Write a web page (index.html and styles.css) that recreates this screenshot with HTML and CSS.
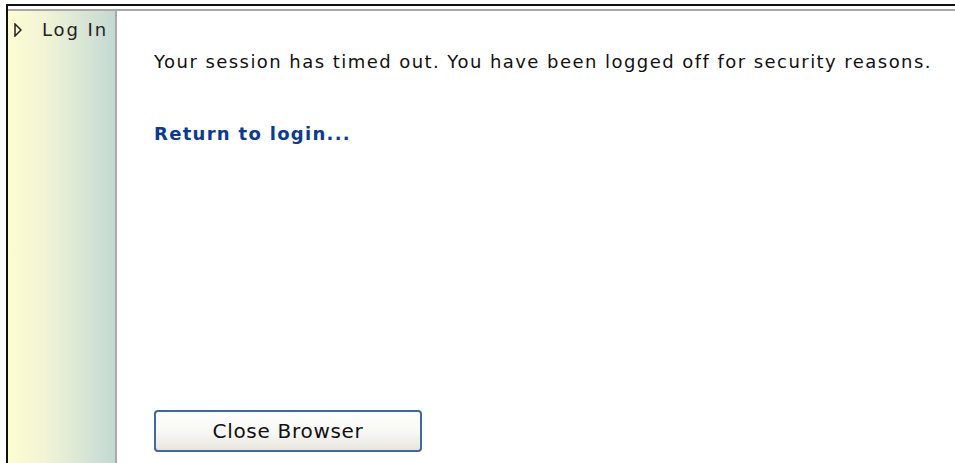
FILE: index.html
```html
<!DOCTYPE html>
<html lang="en">
<head>
<meta charset="utf-8">
<title>Session timed out</title>
<link rel="stylesheet" href="styles.css">
</head>
<body>
  <div class="frame">
    <div class="frame-rule"></div>
    <div class="layout">
      <nav class="sidebar">
        <a class="nav-item" href="#">
          <svg class="nav-arrow" width="8" height="14" viewBox="0 0 8 14" aria-hidden="true">
            <path d="M1 1 L7 7 L1 13 Z" fill="none" stroke="#222" stroke-width="1.5" stroke-linejoin="miter"/>
          </svg>
          <span>Log In</span>
        </a>
      </nav>
      <main class="content">
        <p class="message">Your session has timed out. You have been logged off for security reasons.</p>
        <a class="return-link" href="#">Return to login...</a>
        <div class="actions">
          <button class="btn" type="button">Close Browser</button>
        </div>
      </main>
    </div>
  </div>
</body>
</html>
```

FILE: styles.css
```css
html, body {
  margin: 0;
  padding: 0;
  height: 100%;
  background: #fff;
  overflow: hidden;
}

.frame {
  margin: 4px 0 0 6px;
  height: calc(100% - 4px);
  border-top: 2px solid #111;
  border-left: 2px solid #111;
  display: flex;
  flex-direction: column;
  box-sizing: border-box;
}

.frame-rule {
  margin-top: 3px;
  height: 2px;
  background: #a8a8a8;
  flex: none;
}

.layout {
  flex: 1;
  display: flex;
}

.sidebar {
  width: 107px;
  border-right: 2px solid #a9a9a9;
  background: linear-gradient(to right, #fdfdd2 0%, #f1f4d6 35%, #d8e6d4 70%, #c3d9d3 100%);
  padding-top: 8px;
  box-sizing: content-box;
}

.nav-item {
  display: flex;
  align-items: center;
  gap: 20px;
  padding-left: 6px;
  font-family: "DejaVu Sans", Verdana, sans-serif;
  font-size: 18px;
  letter-spacing: 1.9px;
  color: #222;
  text-decoration: none;
}

.nav-arrow {
  flex: none;
}

.content {
  flex: 1;
  padding: 40px 0 0 37px;
  display: flex;
  flex-direction: column;
  align-items: flex-start;
  font-family: "DejaVu Sans", Verdana, sans-serif;
}

.message {
  margin: 0;
  font-size: 18px;
  letter-spacing: 1.45px;
  color: #111;
  white-space: nowrap;
}

.return-link {
  margin-top: 51px;
  font-size: 18px;
  font-weight: bold;
  letter-spacing: 1.3px;
  color: #0b3a94;
  text-decoration: none;
}

.actions {
  margin-top: auto;
  margin-bottom: 11px;
}

.btn {
  width: 268px;
  height: 42px;
  border: 2px solid #3c6aa2;
  border-radius: 4px;
  background: linear-gradient(to bottom, #ffffff 0%, #f6f6f2 60%, #e6e4dc 100%);
  font-family: "DejaVu Sans", Tahoma, sans-serif;
  font-size: 20px;
  letter-spacing: 0.7px;
  color: #111;
  padding: 0;
  cursor: pointer;
}
```
